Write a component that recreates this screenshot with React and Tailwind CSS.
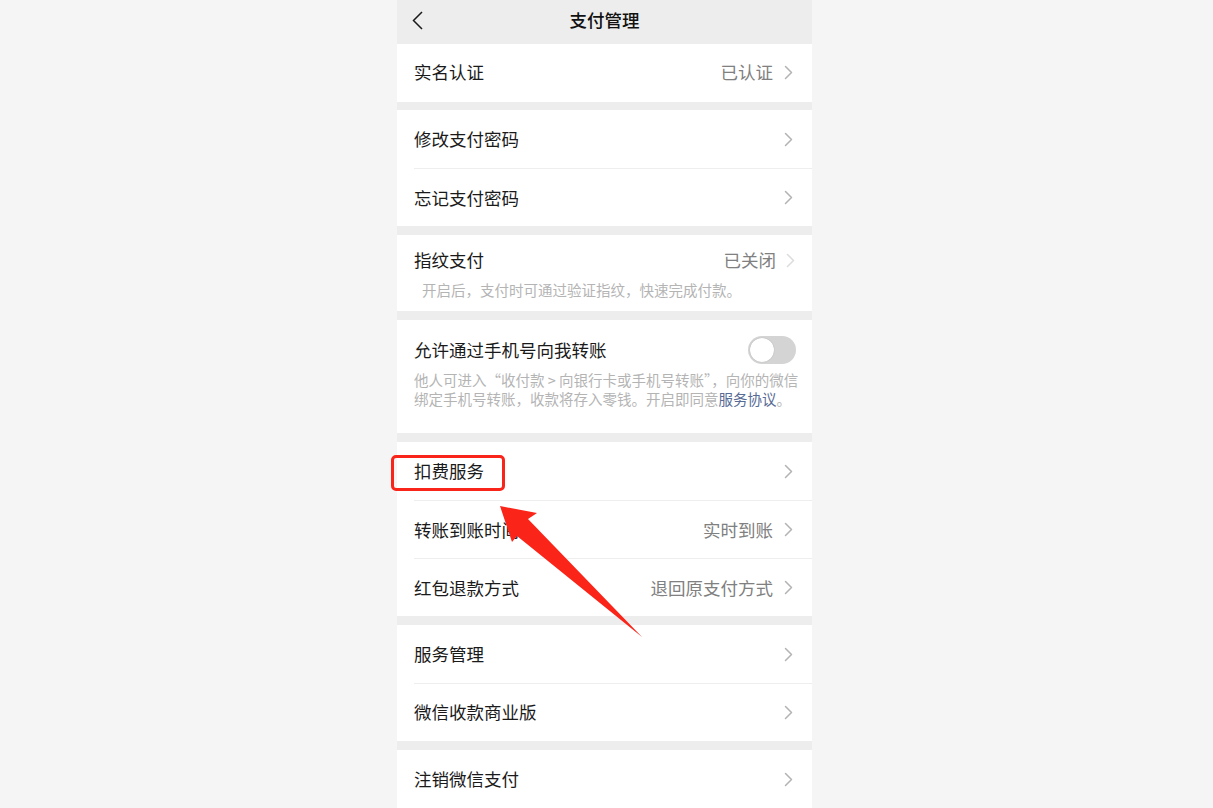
import React from 'react';

const FONT = { fontFamily: '"Noto Sans CJK SC", "Noto Sans", sans-serif' };

const Chevron = ({ light = false }) => (
  <svg width="9" height="15" viewBox="0 0 9 15" className="shrink-0">
    <polyline
      points="1.5,1.5 7.5,7.5 1.5,13.5"
      fill="none"
      stroke={light ? '#dcdcdc' : '#b3b3b3'}
      strokeWidth="1.5"
      strokeLinecap="round"
      strokeLinejoin="round"
    />
  </svg>
);

const Row = ({ label, value, divider = false }) => (
  <div className="pl-[17px]">
    <div
      className={`flex h-[58px] items-center justify-between pr-[19px] ${
        divider ? 'border-t border-[#eeeeee]' : ''
      }`}
    >
      <span className="text-[17.5px] text-[#1a1a1a]">{label}</span>
      <div className="flex items-center gap-[11px]">
        {value && <span className="text-[17.5px] text-[#808080]">{value}</span>}
        <Chevron />
      </div>
    </div>
  </div>
);

const Gap = () => <div className="h-[9px] bg-[#ededed]" />;

const Section = ({ children }) => <div className="bg-white">{children}</div>;

const Arrow = () => (
  <svg
    className="pointer-events-none absolute left-0 top-0"
    width="1213"
    height="808"
    viewBox="0 0 1213 808"
  >
    <polygon
      points="500,506 537,513 528,519 642,637 517,536 512,542"
      fill="#fb2419"
    />
  </svg>
);

export default function App() {
  return (
    <div className="relative h-[808px] w-full overflow-hidden bg-[#f5f5f5]" style={FONT}>
      <div className="ml-[397px] flex h-full w-[415px] flex-col bg-[#ededed]">
        {/* header */}
        <div className="relative flex h-[44px] items-center justify-center bg-[#ededed] pb-[4px]">
          <svg width="12" height="19" viewBox="0 0 12 19" className="absolute left-[15px] top-[11px]">
            <polyline
              points="10,1 1.5,9.5 10,18"
              fill="none"
              stroke="#1a1a1a"
              strokeWidth="1.5"
              strokeLinejoin="miter"
            />
          </svg>
          <span className="text-[17.5px] font-medium text-[#111111]">支付管理</span>
        </div>

        <Section>
          <Row label="实名认证" value="已认证" />
        </Section>
        <Gap />

        <Section>
          <Row label="修改支付密码" />
          <Row label="忘记支付密码" divider />
        </Section>
        <Gap />

        <Section>
          <div className="h-[76px] pl-[17px] pr-[17px] pt-[14px]">
            <div className="flex h-[22px] items-center justify-between">
              <span className="text-[17.5px] text-[#1a1a1a]">指纹支付</span>
              <div className="flex items-center gap-[10px]">
                <span className="text-[17.5px] text-[#808080]">已关闭</span>
                <Chevron light />
              </div>
            </div>
            <div className="mt-[9px] pl-[8px] text-[14.5px] leading-[20px] text-[#b4b4b4]">
              开启后，支付时可通过验证指纹，快速完成付款。
            </div>
          </div>
        </Section>
        <Gap />

        <Section>
          <div className="h-[113px] pl-[17px] pr-[16px] pt-[16px]">
            <div className="flex h-[28px] items-center justify-between">
              <span className="text-[17.5px] text-[#1a1a1a]">允许通过手机号向我转账</span>
              <div className="flex h-[28px] w-[48px] items-center rounded-full bg-[#d4d4d4] p-[2px]">
                <div className="h-[24px] w-[24px] rounded-full bg-white shadow-[0_0_1px_rgba(0,0,0,0.3)]" />
              </div>
            </div>
            <div className="mt-[6px] whitespace-nowrap text-[14.5px] leading-[19px] text-[#b4b4b4]">
              他人可进入“收付款 &gt; 向银行卡或手机号转账”，向你的微信
              <br />
              绑定手机号转账，收款将存入零钱。开启即同意
              <span className="text-[#576b95]">服务协议</span>。
            </div>
          </div>
        </Section>
        <Gap />

        <Section>
          <Row label="扣费服务" />
          <Row label="转账到账时间" value="实时到账" divider />
          <Row label="红包退款方式" value="退回原支付方式" divider />
        </Section>
        <Gap />

        <Section>
          <Row label="服务管理" />
          <Row label="微信收款商业版" divider />
        </Section>
        <Gap />

        <Section>
          <Row label="注销微信支付" />
        </Section>
        <div className="flex-1 bg-white" />
      </div>

      {/* annotation overlay */}
      <div className="pointer-events-none absolute left-[391px] top-[455px] h-[36px] w-[114px] rounded-[5px] border-[3px] border-[#f9251a]" />
      <Arrow />
    </div>
  );
}
